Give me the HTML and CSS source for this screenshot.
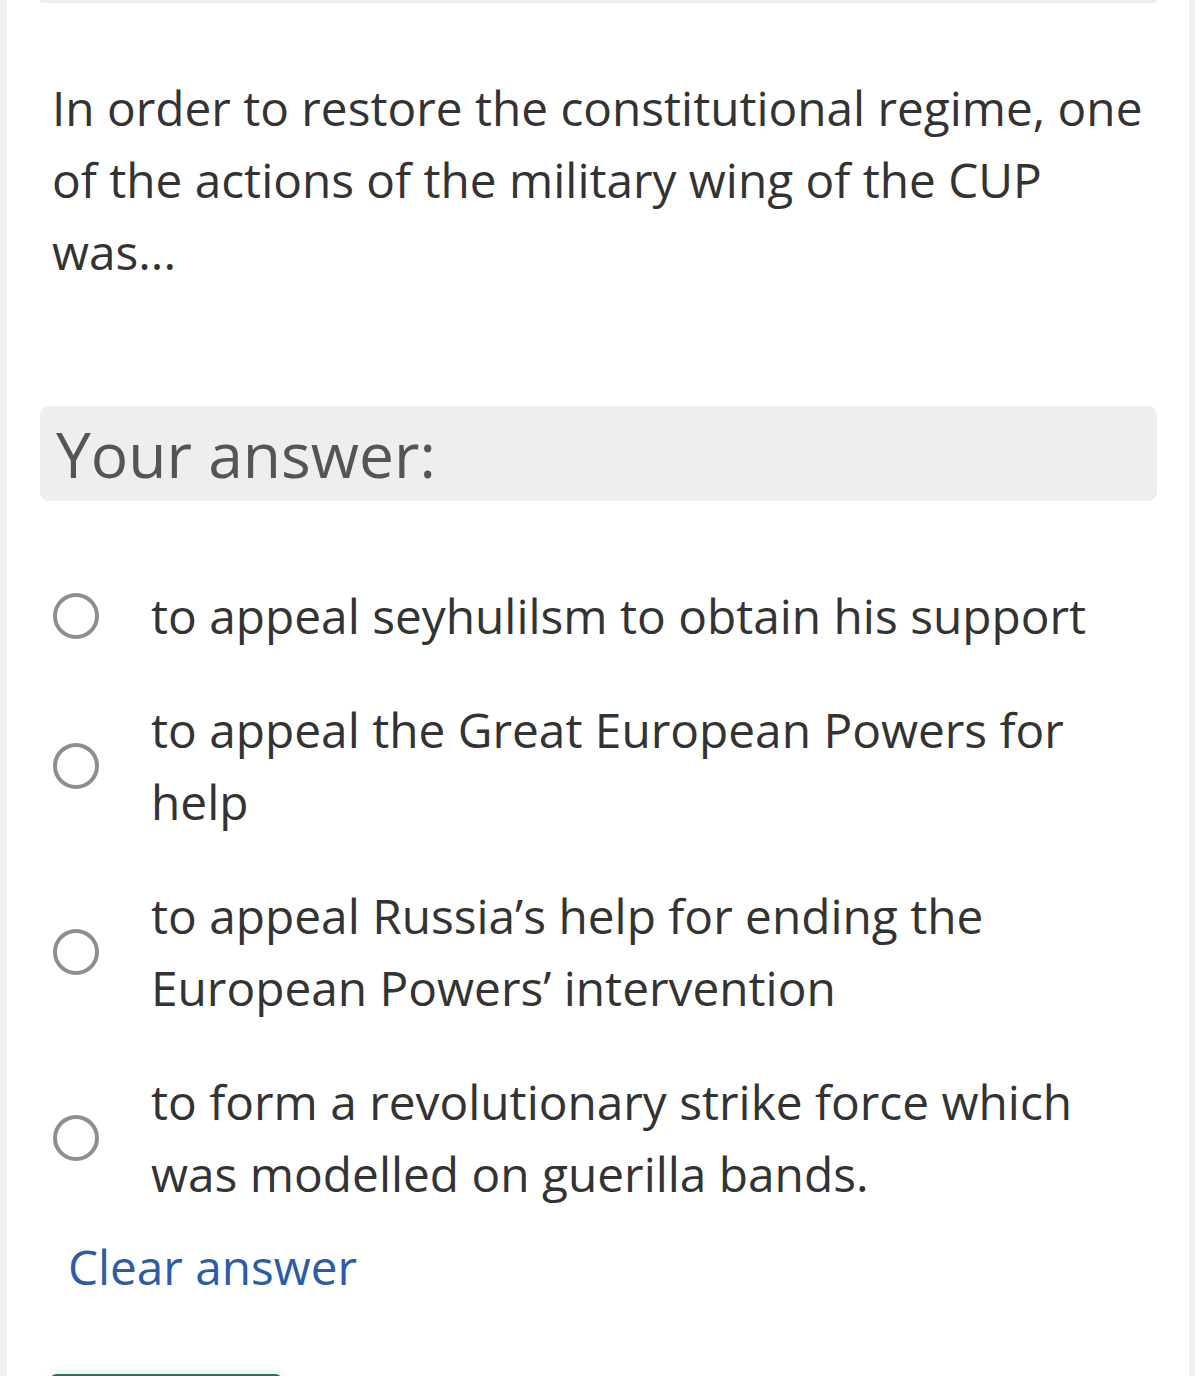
FILE: index.html
```html
<!DOCTYPE html>
<html lang="en">
<head>
<meta charset="utf-8">
<title>Question</title>
<link rel="stylesheet" href="styles.css">
</head>
<body>
<div class="card">
  <div class="prev-edge"></div>
  <div class="question">In order to restore the constitutional regime, one of the actions of the military wing of the CUP was...</div>
  <div class="answer-head">Your answer:</div>
  <div class="options">
    <label class="option"><span class="radio"></span><span class="opt-text">to appeal seyhulilsm to obtain his support</span></label>
    <label class="option"><span class="radio"></span><span class="opt-text">to appeal the Great European Powers for help</span></label>
    <label class="option"><span class="radio"></span><span class="opt-text">to appeal Russia’s help for ending the European Powers’ intervention</span></label>
    <label class="option"><span class="radio"></span><span class="opt-text">to form a revolutionary strike force which was modelled on guerilla bands.</span></label>
  </div>
  <div class="clear">Clear answer</div>
  <div class="next-btn"></div>
</div>
</body>
</html>
```
FILE: styles.css
```css
html, body {
  margin: 0;
  padding: 0;
}
body {
  background: #f1f1f1;
  font-family: "Open Sans", "Noto Sans", sans-serif;
  color: #333333;
  height: 1376px;
  overflow: hidden;
}
.card {
  margin: 0 6px 0 7px;
  background: #ffffff;
  padding: 0 32px 0 33px;
  height: 1376px;
  box-sizing: border-box;
  overflow: hidden;
}
.prev-edge {
  height: 3px;
  background: #ededed;
  border-radius: 0 0 10px 10px;
}
.question {
  margin-top: 69px;
  padding-left: 12px;
  font-size: 47.75px;
  line-height: 72px;
  color: #333333;
}
.answer-head {
  margin-top: 118px;
  background: #eeeeee;
  border-radius: 9px;
  padding: 0 16px;
  font-size: 62.3px;
  line-height: 95px;
  color: #555555;
}
.options {
  margin-top: 58px;
  display: flex;
  flex-direction: column;
}
.option {
  display: flex;
  align-items: center;
  gap: 53px;
  padding: 21px 0 21px 13px;
  font-size: 47.8px;
  line-height: 72px;
  color: #333333;
}
.radio {
  flex: 0 0 auto;
  width: 38px;
  height: 38px;
  border: 4px solid #8e8e8e;
  border-radius: 50%;
}
.opt-text {
  margin-left: -1px;
}
.clear {
  margin-left: 28px;
  font-size: 47.7px;
  line-height: 72px;
  color: #2b5ca6;
}
.next-btn {
  margin-top: 71px;
  margin-left: 9px;
  width: 234px;
  height: 40px;
  background: #2f6e57;
  border-radius: 8px;
  box-shadow: 0 -3px 8px rgba(0, 0, 0, 0.07);
}
```
